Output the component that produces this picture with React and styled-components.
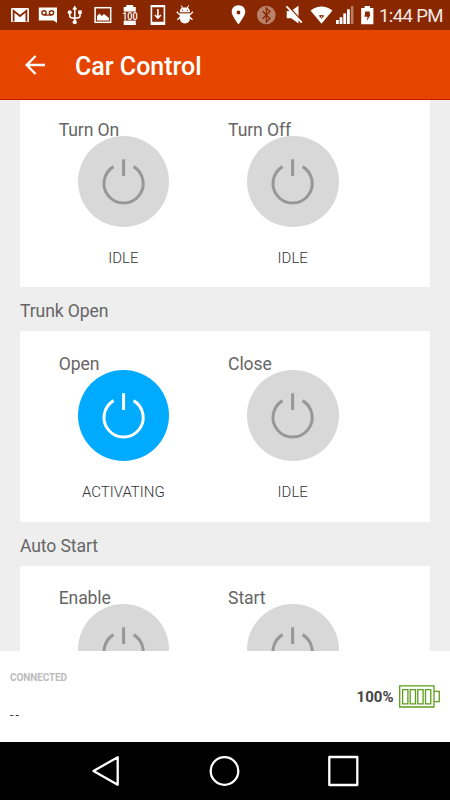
import React from "react";
import styled, { createGlobalStyle } from "styled-components";

const GlobalStyle = createGlobalStyle`
  * {
    box-sizing: border-box;
  }

  body {
    margin: 0;
    font-family: Roboto, "Liberation Sans", sans-serif;
  }
`;

const SECTIONS = [
  {
    title: null,
    controls: [
      { label: "Turn On", status: "IDLE" },
      { label: "Turn Off", status: "IDLE" },
    ],
  },
  {
    title: "Trunk Open",
    controls: [
      { label: "Open", status: "ACTIVATING", active: true },
      { label: "Close", status: "IDLE" },
    ],
  },
  {
    title: "Auto Start",
    controls: [{ label: "Enable" }, { label: "Start" }],
  },
];

// every status icon is drawn around x=13.75 of a 27.5px wide slot
function Slot({ children }) {
  return <SlotSvg viewBox="0 0 27.5 30">{children}</SlotSvg>;
}

function StatusIcons() {
  return (
    <>
      <Slot>
        <rect x="5" y="8" width="18" height="14" rx="1.2" />
        <path d="M7.6 21.5V10.8L14 16L20.4 10.8V21.5" fill="none" stroke="#882700" strokeWidth="1.8" />
      </Slot>
      <Slot>
        <path d="M4.8 7.5H23V23L19.5 20.5H4.8Z" />
        <g fill="none" stroke="#882700" strokeWidth="1.4">
          <circle cx="10" cy="12.8" r="2.1" />
          <circle cx="17.5" cy="12.8" r="2.1" />
          <path d="M10 15H17.5" />
        </g>
      </Slot>
      <Slot>
        <path d="M13.75 5.5L16.3 9.5H11.2Z" />
        <circle cx="13.75" cy="22.2" r="2.1" />
        <path d="M13.75 8V22M8.7 13V16Q8.7 18.2 13.75 18.2Q19 18.2 19 16V12" fill="none" stroke="#fff" strokeWidth="1.6" />
        <circle cx="8.7" cy="12.3" r="2" />
        <rect x="17.2" y="10.4" width="3.6" height="3.6" />
      </Slot>
      <Slot>
        <rect x="6.1" y="7.7" width="15.6" height="14.6" fill="none" stroke="#fff" strokeWidth="1.5" />
        <path d="M8 20.5V16L10.5 13.5L12.7 16L15 14L20 18V20.5Z" />
      </Slot>
      <Slot>
        <path d="M10.3 5H17.2V7H19.8V25H7.7V7H10.3Z" />
        <rect x="6" y="11.6" width="15.5" height="9" fill="#882700" />
        <BadgeText x="13.9" y="19.8" textLength="15.5" lengthAdjust="spacingAndGlyphs">
          100
        </BadgeText>
      </Slot>
      <Slot>
        <path fillRule="evenodd" d="M6.6 5H21.2V25H6.6ZM8.2 7.2V21.8H19.6V7.2Z" />
        <path d="M13.9 9V17M10.9 15L13.9 18L16.9 15" fill="none" stroke="#fff" strokeWidth="1.6" />
      </Slot>
      <Slot>
        <path d="M8.8 12.3Q8.8 8.6 11 7.9L9.7 5.8L10.4 5.3L12 7.4H15.8L17.4 5.3L18.1 5.8L16.8 7.9Q19 8.6 19 12.3ZM8.8 13.5H19V18Q19 23.2 13.9 23.4Q8.8 23.2 8.8 18Z" />
        <path d="M5.7 11.8L8.5 14.4H19.3L22 11.8M6.3 19.8L9.5 17H18.3L21.5 19.8" fill="none" stroke="#fff" strokeWidth="1.4" />
        <circle cx="11.6" cy="10.2" r=".6" fill="#882700" />
        <circle cx="16.2" cy="10.2" r=".6" fill="#882700" />
      </Slot>
    </>
  );
}

function SystemIcons() {
  return (
    <>
      <Slot>
        <path fillRule="evenodd" d="M13.5 5.2C9.6 5.2 6.7 8 6.7 11.7C6.7 16 13.5 24.2 13.5 24.2S20.3 16 20.3 11.7C20.3 8 17.4 5.2 13.5 5.2ZM13.5 10.6A1.9 1.9 0 1 1 13.5 14.4A1.9 1.9 0 1 1 13.5 10.6Z" />
      </Slot>
      <Slot>
        <circle cx="13.3" cy="15" r="9.3" opacity=".42" />
        <path d="M9.6 11.2L16.9 18.5L13.3 22V8L16.9 11.5L9.6 18.8" fill="none" stroke="#882700" strokeWidth="1.3" />
      </Slot>
      <Slot>
        <path d="M6.7 11H11L18.5 5.8V23.5L11.3 18.2H6.7Z" />
        <path d="M7.5 5L23 22.5" stroke="#882700" strokeWidth="1.6" />
        <path d="M6.5 6.3L21.8 22.7" stroke="#fff" strokeWidth="1.8" />
      </Slot>
      <Slot>
        <path d="M2.5 10.4Q13.5 2.4 24.5 10.4L13.5 23.8Z" />
        <path d="M10.7 15.6Q13.5 14.6 16.3 15.6L13.5 19Z" fill="#882700" />
        <circle cx="13.5" cy="17" r=".7" />
      </Slot>
      <SignalSvg viewBox="0 0 20 30">
        <rect x="1" y="20" width="2.8" height="4" />
        <rect x="4.6" y="17.2" width="2.8" height="6.8" />
        <rect x="8.3" y="13.4" width="2.8" height="10.6" />
        <rect x="12" y="9.3" width="2.8" height="14.7" />
        <rect x="15.8" y="6" width="2.6" height="18" opacity=".4" />
      </SignalSvg>
      <ChargeSvg viewBox="0 0 24 30">
        <path d="M9.6 6H15V8H18.4V24.2H6.2V8H9.6Z" />
        <path d="M10.2 11.5H14.8V14.6H15.6L11.8 21.2L12.6 16.8H9.5Z" fill="#882700" />
      </ChargeSvg>
    </>
  );
}

function PowerControl({ label, status, active }) {
  return (
    <Control>
      <ControlLabel>{label}</ControlLabel>
      <PowerButton $active={active} aria-label={label}>
        <svg width="91.6" height="91.6" viewBox="0 0 91.6 91.6" fill="none" stroke="currentColor" strokeWidth="3">
          <path d="M35.6 30.6A19.6 19.6 0 1 0 55.6 30.6M45.6 23.3V40" />
        </svg>
      </PowerButton>
      {status && <ControlStatus>{status}</ControlStatus>}
    </Control>
  );
}

function BatteryIcon() {
  return (
    <svg width="41" height="23" viewBox="0 0 41 23" fill="none" stroke="#5d9e1c" strokeWidth="1.3">
      <path d="M.7 .9H35V22H.7ZM35 6.3H40.3V16.7H35" />
      <path d="M3.6 4.6H8.9V18.8H3.6ZM11.2 4.6H16.5V18.8H11.2ZM18.8 4.6H24.1V18.8H18.8ZM26.5 4.6H31.8V18.8H26.5Z" />
    </svg>
  );
}

function App() {
  return (
    <Screen>
      <GlobalStyle />
      <StatusBar>
        <IconGroup>
          <StatusIcons />
        </IconGroup>
        <IconGroup>
          <SystemIcons />
          <Clock>1:44 PM</Clock>
        </IconGroup>
      </StatusBar>
      <AppBar>
        <svg width="20" height="20" viewBox="0 0 20 20" fill="none" stroke="#fff" strokeWidth="2.4">
          <path d="M20 10H2M10.6 1L1.7 10L10.6 19" />
        </svg>
        <Title>Car Control</Title>
      </AppBar>
      <Content>
        {SECTIONS.map((section, i) => (
          <React.Fragment key={i}>
            {section.title && <SectionTitle>{section.title}</SectionTitle>}
            <Card>
              {section.controls.map((control) => (
                <PowerControl key={control.label} {...control} />
              ))}
            </Card>
          </React.Fragment>
        ))}
      </Content>
      <Footer>
        <div>
          <Connection>CONNECTED</Connection>
          <Vehicle>--</Vehicle>
        </div>
        <BatteryLevel>
          100%
          <BatteryIcon />
        </BatteryLevel>
      </Footer>
      <NavBar>
        <svg width="31" height="32" viewBox="0 0 31 32">
          <path d="M2.5 16L26.7 2.2V29.8Z" />
        </svg>
        <svg width="32" height="32" viewBox="0 0 32 32">
          <circle cx="15.5" cy="16" r="13.8" />
        </svg>
        <svg width="32" height="32" viewBox="0 0 32 32">
          <rect x="2.3" y="2" width="28" height="28" />
        </svg>
      </NavBar>
    </Screen>
  );
}

const Screen = styled.div`
  display: flex;
  flex-direction: column;
  width: 450px;
  height: 800px;
  overflow: hidden;
  background: #eeeeee;
`;

const StatusBar = styled.div`
  display: flex;
  justify-content: space-between;
  flex: none;
  height: 30px;
  padding: 0 7.5px 0 6.2px;
  background: #882700;
`;

const IconGroup = styled.div`
  display: flex;
`;

const SlotSvg = styled.svg`
  width: 27.5px;
  height: 30px;
  fill: #ffffff;
`;

const SignalSvg = styled(SlotSvg)`
  width: 20px;
`;

const ChargeSvg = styled(SlotSvg)`
  width: 24px;
`;

const BadgeText = styled.text`
  font-size: 11px;
  font-weight: 500;
  text-anchor: middle;
`;

const Clock = styled.div`
  width: 63.5px;
  color: #f3e9e5;
  font-size: 18.6px;
  letter-spacing: -0.65px;
  line-height: 32px;
  white-space: nowrap;
`;

const AppBar = styled.div`
  display: flex;
  align-items: center;
  flex: none;
  gap: 30px;
  height: 70px;
  padding: 0 25px;
  border-bottom: 1px solid #d01800;
  background: #e64500;
`;

const Title = styled.h1`
  margin: 0;
  color: #ffffff;
  font-size: 25px;
  font-weight: 500;
  line-height: 30px;
  padding-top: 5px;
`;

const Content = styled.div`
  flex: 1;
  min-height: 0;
  overflow: hidden;
  padding: 0 20px;

  /* the list is scrolled slightly past the top of the first card */
  & > :first-child {
    margin-top: -3px;
  }
`;

const SectionTitle = styled.h2`
  margin: 0;
  padding-top: 3.9px;
  color: #666666;
  font-size: 17.6px;
  font-weight: 400;
  letter-spacing: -0.12px;
  line-height: 40px;
`;

const Card = styled.div`
  display: flex;
  gap: 40.1px;
  height: 190.4px;
  padding: 22.6px 38.7px 0;
  background: #ffffff;
`;

const Control = styled.div`
  display: flex;
  flex-direction: column;
  align-items: center;
  width: 129.3px;
`;

const ControlLabel = styled.div`
  align-self: flex-start;
  color: #666666;
  font-size: 17.6px;
  letter-spacing: -0.12px;
  line-height: 20px;
`;

const PowerButton = styled.button`
  flex: none;
  width: 91.6px;
  height: 91.6px;
  margin-top: -4px;
  padding: 0;
  border: 0;
  border-radius: 50%;
  background: ${(props) => (props.$active ? "#00aaff" : "#d8d8d8")};
  color: ${(props) => (props.$active ? "#ffffff" : "#979797")};

  svg {
    display: block;
  }
`;

const ControlStatus = styled.div`
  margin-top: 20.8px;
  color: #333333;
  font-size: 15px;
  font-weight: 300;
  line-height: 20px;
`;

const Footer = styled.div`
  display: flex;
  justify-content: space-between;
  flex: none;
  height: 91px;
  padding: 20px 10px 0;
  background: #ffffff;
`;

const Connection = styled.div`
  color: #bbbbbb;
  font-size: 10px;
  font-weight: 700;
  letter-spacing: -0.1px;
  line-height: 14px;
`;

const Vehicle = styled.div`
  margin-top: 22px;
  color: #333333;
  font-size: 12.5px;
  letter-spacing: 2px;
  line-height: 16px;
`;

const BatteryLevel = styled.div`
  display: flex;
  align-items: center;
  gap: 5.5px;
  height: 23px;
  margin-top: 14px;
  color: #444444;
  font-size: 15px;
  font-weight: 700;
`;

const NavBar = styled.div`
  display: flex;
  align-items: center;
  justify-content: space-between;
  flex: none;
  height: 58px;
  padding: 0 91px;
  background: #000000;

  svg {
    fill: none;
    stroke: #ffffff;
    stroke-width: 2.3;
    stroke-linejoin: round;
  }
`;

export default App;
